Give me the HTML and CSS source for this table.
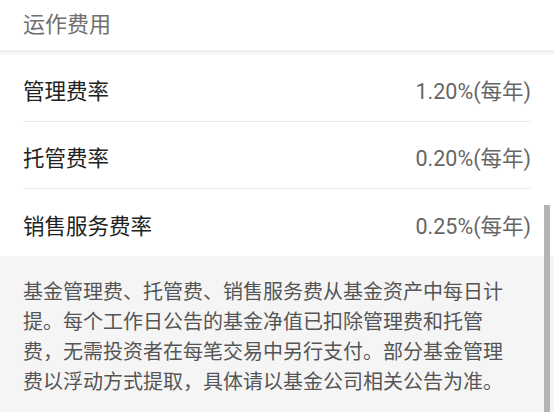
FILE: index.html
```html
<!DOCTYPE html>
<html lang="zh-CN">
<head>
<meta charset="utf-8">
<title>运作费用</title>
<link rel="stylesheet" href="styles.css">
</head>
<body>
<div class="page">
  <div class="header">运作费用</div>
  <div class="sep"></div>
  <div class="list">
    <div class="row"><span class="label">管理费率</span><span class="value">1.20%(每年)</span></div>
    <div class="row"><span class="label">托管费率</span><span class="value">0.20%(每年)</span></div>
    <div class="row last"><span class="label">销售服务费率</span><span class="value">0.25%(每年)</span></div>
  </div>
  <div class="note">基金管理费、托管费、销售服务费从基金资产中每日计提。每个工作日公告的基金净值已扣除管理费和托管费，无需投资者在每笔交易中另行支付。部分基金管理费以浮动方式提取，具体请以基金公司相关公告为准。</div>
  <div class="scrollbar"></div>
</div>
</body>
</html>
```

FILE: styles.css
```css
html, body {
  margin: 0;
  padding: 0;
  background: #f5f5f5;
}
.page {
  position: relative;
  width: 554px;
  height: 412px;
  overflow: hidden;
  font-family: Roboto, "Noto Sans CJK SC", sans-serif;
  background: #f5f5f5;
}
.header {
  height: 50px;
  box-sizing: border-box;
  padding: 8px 23px 0;
  font-size: 22px;
  line-height: 34px;
  color: #707070;
  background: #fff;
}
.sep {
  height: 5px;
  background: linear-gradient(#eeeeee, #f8f8f8);
}
.list {
  background: #fff;
  padding: 0 23px;
}
.row {
  height: 67px;
  display: flex;
  align-items: center;
  justify-content: space-between;
  border-bottom: 1px solid #ececec;
  box-sizing: border-box;
  padding-top: 3px;
}
.row.last {
  border-bottom: none;
}
.label {
  font-size: 21.5px;
  color: #222;
}
.value {
  font-size: 21.5px;
  color: #666;
}
.note {
  padding: 21px 40px 0 23px;
  font-size: 20px;
  line-height: 30px;
  color: #555;
}
.scrollbar {
  position: absolute;
  left: 544px;
  top: 205px;
  width: 6px;
  height: 207px;
  background: #b4b4b4;
}
```
